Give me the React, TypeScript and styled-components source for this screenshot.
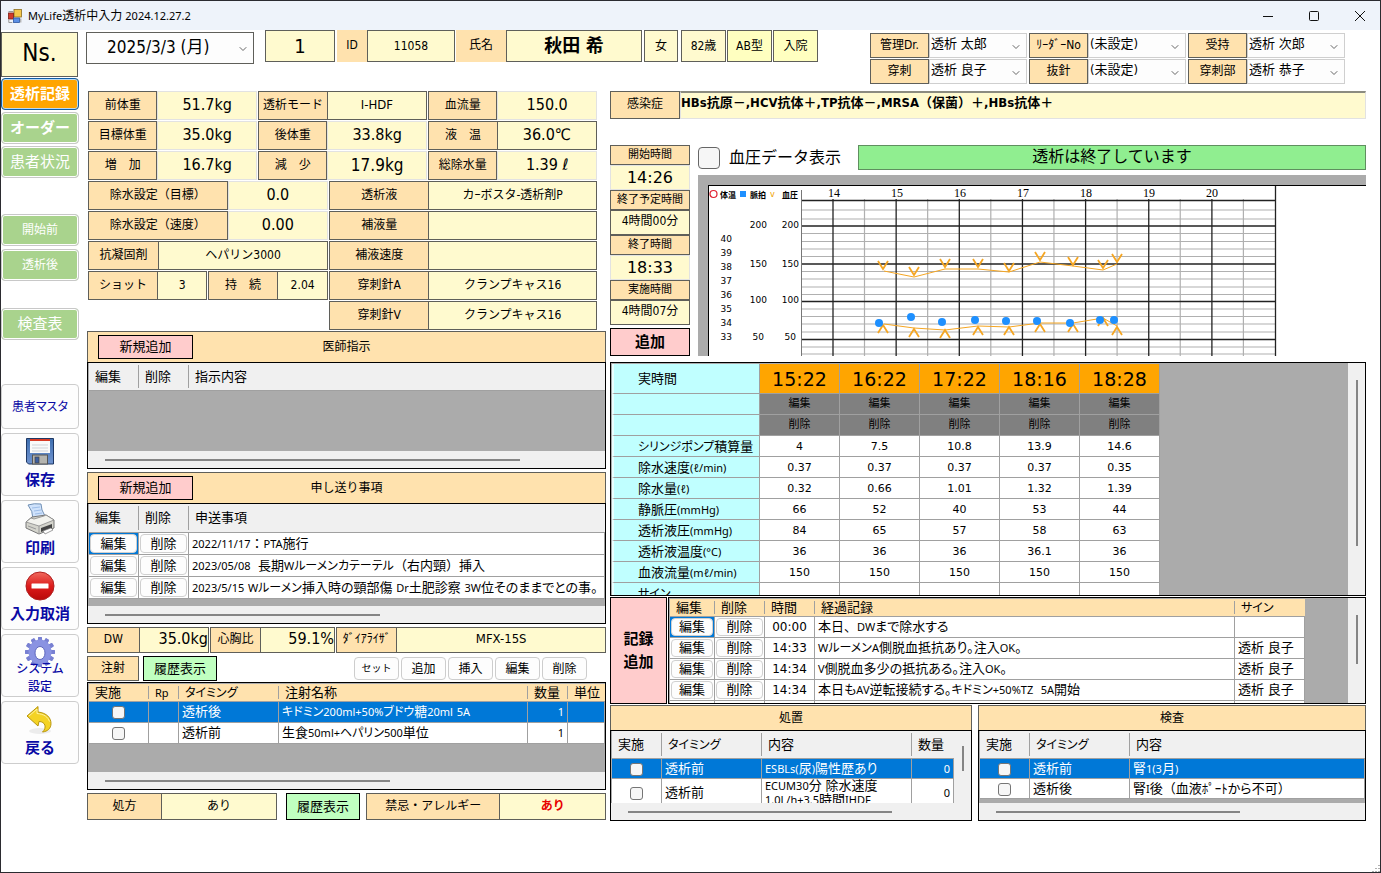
import React, { useId } from "react";
import styled, { createGlobalStyle, css } from "styled-components";
import { ChevronDown } from "lucide-react";

const UI = `"DejaVu Sans Condensed", "Noto Sans", "Noto Sans CJK JP", sans-serif`;
const WIDE = `"DejaVu Sans", "Noto Sans CJK JP", sans-serif`;
const NARROW = `"Noto Sans", "Noto Sans CJK JP", sans-serif`;

const peach = "#ffe2ae";
const cream = "#fffacf";
const line = "#5f5f5a";
const gridLine = "#a0a0a0";
const gray = "#ababab";
const blue = "#0078d7";

const GlobalStyle = createGlobalStyle`
  *, *::before, *::after { box-sizing: border-box; }
  body { margin: 0; background: #fff; color: #000; font: 12px/16px ${UI}; }
  button, input, select { font: inherit; color: inherit; margin: 0; padding: 0; }
  button { cursor: pointer; white-space: nowrap; }
`;

/* ---------- window ---------- */

const Shell = styled.div`
  min-height: 100vh;
  display: flex;
  flex-direction: column;
  border: 1px solid #2b2b30;
  background: #fff;
`;

const TitleBar = styled.header`
  height: 29px;
  display: flex;
  align-items: center;
  gap: 6px;
  padding: 0 14px 0 7px;
  background: #eef3fa;
`;

const Title = styled.h1`
  margin: 0;
  flex: 1;
  font: 12px/16px ${NARROW};
`;

const WindowButtons = styled.div`
  display: flex;
  gap: 34px;
`;

const WindowButton = styled.button`
  width: 12px;
  height: 12px;
  border: 0;
  background: none;
  svg { display: block; }
`;

const Main = styled.div`
  flex: 1;
  display: flex;
  gap: 6px;
  padding-right: 14px;
`;

const Grip = styled.svg`
  align-self: flex-end;
  display: block;
`;

/* ---------- side bar ---------- */

const Sidebar = styled.nav`
  flex: 0 0 79px;
  display: flex;
  flex-direction: column;
  padding: 2px 1px 0 0;
`;

const Role = styled.div`
  width: 77px;
  height: 45px;
  margin-bottom: 1px;
  border: 1px solid ${line};
  background: ${cream};
  font: 24px/40px ${UI};
  text-align: center;
`;

const NavGroup = styled.div<{ $top?: number; $gap?: number }>`
  display: flex;
  flex-direction: column;
  gap: ${(p) => p.$gap ?? 2}px;
  margin-top: ${(p) => p.$top ?? 0}px;
`;

const NavButton = styled.button<{ $active?: boolean; $bold?: boolean; $small?: boolean }>`
  width: 78px;
  height: 32px;
  border: 1px solid ${(p) => (p.$active ? "#0f5fa8" : "#c8c8c8")};
  border-radius: 4px;
  background: ${(p) => (p.$active ? "#ffa500" : "#a9d38d")};
  box-shadow: inset 0 0 0 1px ${(p) => (p.$active ? "#bcd9ee" : "#fff")};
  color: #fff;
  font-size: ${(p) => (p.$small ? 12 : 15)}px;
  font-weight: ${(p) => (p.$bold ? 700 : 400)};
`;

const ToolGroup = styled.div`
  display: flex;
  flex-direction: column;
  gap: 4px;
  margin-top: 44px;
`;

const ToolButton = styled.button<{ $short?: boolean; $small?: boolean }>`
  width: 78px;
  height: ${(p) => (p.$short ? 45 : 63)}px;
  display: flex;
  flex-direction: column;
  align-items: center;
  justify-content: center;
  gap: ${(p) => (p.$small ? 0 : 4)}px;
  padding-bottom: ${(p) => (p.$small || p.$short ? 0 : 3)}px;
  border: 1px solid #cdcdcd;
  border-radius: 4px;
  background: #fdfdfd;
  color: #0a0aa5;
  font-size: ${(p) => (p.$short || p.$small ? 12 : 15)}px;
  font-weight: ${(p) => (p.$short ? 400 : p.$small ? 500 : 700)};
  line-height: 18px;
  font-feature-settings: ${(p) => (p.$short ? `"palt"` : "normal")};
  svg { flex: none; }
`;

const OverIcon = styled.span`
  margin-top: -8px;
`;

/* ---------- header ---------- */

const Content = styled.main`
  flex: 1;
  min-width: 0;
`;

const Header = styled.section`
  display: flex;
  align-items: flex-start;
  height: 61px;
`;

const SelectBox = styled.div<{ $w: number; $h: number; $soft?: boolean }>`
  position: relative;
  width: ${(p) => p.$w}px;
  height: ${(p) => p.$h}px;
  border: 1px solid ${(p) => (p.$soft ? "#cfcfcf" : line)};
  background: #fdfdfd;
  svg { position: absolute; right: 4px; top: 50%; margin-top: -5px; pointer-events: none; }
`;

const Select = styled.select<{ $big?: boolean }>`
  appearance: none;
  width: 100%;
  height: 100%;
  border: 0;
  background: none;
  padding: 0 20px 3px ${(p) => (p.$big ? 20 : 1)}px;
  font-size: ${(p) => (p.$big ? 17 : 13)}px;
`;

const DateArea = styled.div`
  padding-top: 2px;
  margin-right: 11px;
`;

const PatientBox = styled.div<{ $w: number; $mr?: number; $size?: number; $bold?: boolean; $tag?: boolean; $bright?: boolean }>`
  width: ${(p) => p.$w}px;
  height: 32px;
  margin-right: ${(p) => p.$mr ?? 0}px;
  border: ${(p) => (p.$tag ? "0" : `1px solid ${line}`)};
  background: ${(p) => (p.$tag ? peach : p.$bright ? "#ffffc0" : cream)};
  font-size: ${(p) => p.$size ?? 12}px;
  font-weight: ${(p) => (p.$bold ? 700 : 400)};
  line-height: 30px;
  text-align: center;
  white-space: nowrap;
`;

const Staff = styled.div`
  margin: 3px 21px 0 auto;
  display: grid;
  grid-template-columns: repeat(3, auto);
  gap: 1px 2px;
`;

const StaffItem = styled.div`
  display: flex;
`;

const StaffLabel = styled.label`
  width: 59px;
  height: 25px;
  border: 1px solid ${line};
  background: ${peach};
  line-height: 22px;
  text-align: center;
`;

/* ---------- labelled cells ---------- */

const Columns = styled.div`
  display: flex;
  gap: 4px;
  padding-left: 1px;
`;

const Left = styled.div`
  flex: 519 1 0;
  min-width: 0;
  display: flex;
  flex-direction: column;
  gap: 3px;
`;

const Right = styled.div`
  flex: 756 1 0;
  min-width: 0;
  display: flex;
  flex-direction: column;
`;

const Settings = styled.div`
  display: flex;
  flex-direction: column;
  gap: 1px;
  padding: 0 9px 0 1px;
  margin-bottom: -2px;
`;

const Line = styled.div<{ $gap?: number; $h?: number }>`
  display: flex;
  gap: ${(p) => p.$gap ?? 1}px;
  height: ${(p) => p.$h ?? 29}px;
`;

const Half = styled.div<{ $w: number }>`
  flex: ${(p) => p.$w} 1 0;
  min-width: 0;
  display: flex;
  flex-direction: column;
  gap: 1px;
`;

const PairBox = styled.div<{ $w: number }>`
  flex: ${(p) => p.$w} 1 0;
  min-width: 0;
  display: flex;
`;

const cell = css`
  min-width: 0;
  height: 100%;
  border: 1px solid ${line};
  display: flex;
  align-items: center;
  justify-content: center;
  white-space: nowrap;
  padding-bottom: 2px;
`;

const Label = styled.label<{ $w: number }>`
  ${cell}
  flex: ${(p) => p.$w} 1 0;
  background: ${peach};
`;

const Value = styled.output<{ $w: number; $size?: number; $right?: boolean; $red?: boolean }>`
  ${cell}
  flex: ${(p) => p.$w} 1 0;
  margin-left: -1px;
  background: ${cream};
  font-size: ${(p) => p.$size ?? 12}px;
  ${(p) => p.$right && `justify-content: flex-end;`}
  ${(p) => p.$red && `color: #e80000; font-weight: 700;`}
`;

const ValueInput = styled.input<{ $w: number; $size?: number }>`
  flex: ${(p) => p.$w} 1 0;
  min-width: 0;
  width: 0;
  height: 100%;
  border: 1px solid #e2e2e2;
  border-radius: 0;
  background: ${cream};
  font-size: ${(p) => p.$size ?? 16}px;
  text-align: center;
  padding-bottom: 2px;
`;

type PairProps = {
  label: string;
  value: string;
  lw: number;
  vw: number;
  edit?: boolean;
  size?: number;
  right?: boolean;
  red?: boolean;
};

function Pair({ label, value, lw, vw, edit, size, right, red }: PairProps) {
  const id = useId();
  return (
    <PairBox $w={lw + vw}>
      <Label $w={lw} htmlFor={id}>{label}</Label>
      {edit ? (
        <ValueInput $w={vw} $size={size} id={id} defaultValue={value} />
      ) : (
        <Value $w={vw} $size={size} $right={right} $red={red} id={id}>{value}</Value>
      )}
    </PairBox>
  );
}

/* ---------- grids ---------- */

const Panel = styled.section<{ $h: number; $w?: number }>`
  height: ${(p) => p.$h}px;
  display: flex;
  flex-direction: column;
  ${(p) => p.$w && `flex: ${p.$w} 1 0; min-width: 0;`}
`;

const PanelHead = styled.div<{ $h: number }>`
  flex: 0 0 ${(p) => p.$h}px;
  display: grid;
  grid-template-columns: 1fr auto 1fr;
  align-items: center;
  padding: 0 10px;
  border: 1px solid ${line};
  border-bottom: 0;
  background: ${peach};
`;

const PanelTitle = styled.h2`
  grid-column: 2;
  margin: 0;
  font-size: 12px;
  font-weight: 400;
`;

const Frame = styled.div<{ $h?: number }>`
  ${(p) => (p.$h ? `height: ${p.$h}px;` : "flex: 1; min-height: 0;")}
  display: flex;
  min-width: 0;
  overflow: hidden;
  border: 1px solid #000;
  background: ${gray};
`;

const FrameBody = styled.div`
  flex: 1;
  min-width: 0;
  min-height: 0;
  display: flex;
  flex-direction: column;
`;

const Clip = styled.div<{ $top?: boolean }>`
  flex: 1;
  min-height: 0;
  overflow: hidden;
  padding-left: 1px;
  padding-top: ${(p) => (p.$top ? 1 : 0)}px;
`;

const HBar = styled.div`
  flex: 0 0 17px;
  display: flex;
  align-items: center;
  padding-left: 17px;
  background: #f0f0f0;
`;

const HThumb = styled.div<{ $pct: number }>`
  width: ${(p) => p.$pct}%;
  height: 2px;
  background: #858585;
`;

const VBar = styled.div<{ $top: number }>`
  flex: 0 0 17px;
  display: flex;
  justify-content: center;
  padding-top: ${(p) => p.$top}px;
  background: #f0f0f0;
`;

const VThumb = styled.div<{ $h: number }>`
  width: 2px;
  height: ${(p) => p.$h}px;
  background: #858585;
`;

const Table = styled.table<{ $fit?: boolean }>`
  width: ${(p) => (p.$fit ? "auto" : "100%")};
  table-layout: fixed;
  border-collapse: separate;
  border-spacing: 0;
  font-size: 13px;
  font-feature-settings: "palt";
`;

const Th = styled.th<{ $w?: number; $h: number; $peach?: boolean; $last?: boolean }>`
  ${(p) => p.$w && `width: ${p.$w}px;`}
  height: ${(p) => p.$h}px;
  padding: 0 0 0 6px;
  border-bottom: 1px solid ${gridLine};
  background: ${(p) =>
    `${p.$last ? "" : `linear-gradient(${gridLine}, ${gridLine}) right center / 1px calc(100% - 4px) no-repeat, `}linear-gradient(${p.$peach ? peach : "#f0f0f0"}, ${p.$peach ? peach : "#f0f0f0"})`};
  font-weight: 400;
  line-height: 16px;
  text-align: left;
  white-space: nowrap;
  overflow: hidden;
`;

const Tr = styled.tr<{ $selected?: boolean }>`
  background: ${(p) => (p.$selected ? blue : "#fff")};
  color: ${(p) => (p.$selected ? "#fff" : "#000")};
`;

const Td = styled.td<{ $h: number; $align?: string; $current?: boolean; $tight?: boolean }>`
  height: ${(p) => p.$h}px;
  padding: 0 3px;
  ${(p) => p.$tight && "padding: 0 1px;"}
  border-right: 1px solid ${gridLine};
  border-bottom: 1px solid ${gridLine};
  ${(p) => p.$current && `box-shadow: inset 0 0 0 2px ${blue};`}
  line-height: 14px;
  text-align: ${(p) => p.$align ?? "left"};
  white-space: nowrap;
  overflow: hidden;
`;

const Latin = styled.span`
  font: 11px/14px ${NARROW};
`;

const Kana = styled.span`
  font-size: 12px;
`;

const Mark = styled.span`
  font-feature-settings: normal;
`;

const Clock = styled.span`
  font: 12px/14px ${WIDE};
`;

const RUNS = /([\x21-\x7eℓ°]+|[ァ-ヺー]+|[（）：、])/;

/* Western and katakana runs are set smaller than the kanji around them. */
function Mixed({ text }: { text: string }) {
  return (
    <>
      {text.split(RUNS).map((part, i) => {
        if (i % 2 === 0) return part;
        if (/^[\x21-\x7eℓ°]/.test(part)) return <Latin key={i}>{part}</Latin>;
        if (/^[（）：、]/.test(part)) return <Mark key={i}>{part}</Mark>;
        return <Kana key={i}>{part}</Kana>;
      })}
    </>
  );
}

const RowButton = styled.button<{ $h: number }>`
  display: block;
  width: 100%;
  height: ${(p) => p.$h}px;
  border: 1px solid #d0d0d0;
  border-radius: 4px;
  background: #fdfdfd;
  color: #000;
  line-height: 14px;
`;

const Check = styled.input`
  appearance: none;
  display: inline-block;
  vertical-align: middle;
  width: 13px;
  height: 13px;
  border: 1px solid #757575;
  border-radius: 3px;
  background: #f6f6f6;
`;

const ActionButton = styled.button<{ $tone: "pink" | "green"; $w?: number; $h?: number; $size?: number; $bold?: boolean }>`
  ${(p) => p.$w && `width: ${p.$w}px;`}
  height: ${(p) => (p.$h ? `${p.$h}px` : "100%")};
  border: 1px solid #000;
  background: ${(p) => (p.$tone === "pink" ? "#ffcccc" : "#c0ffc0")};
  font-size: ${(p) => p.$size ?? 13}px;
  font-weight: ${(p) => (p.$bold ? 700 : 400)};
`;

const SmallButton = styled.button<{ $tiny?: boolean }>`
  width: 45px;
  height: 23px;
  border: 1px solid #cdcdcd;
  border-radius: 4px;
  background: #fdfdfd;
  font-size: ${(p) => (p.$tiny ? 10 : 12)}px;
`;

const SmallButtons = styled.div`
  flex: 1;
  display: flex;
  justify-content: flex-end;
  align-items: center;
  gap: 2px;
  padding-right: 19px;
`;

const Tag = styled.div<{ $w: number }>`
  ${cell}
  width: ${(p) => p.$w}px;
  background: ${peach};
`;

const InjectionArea = styled.div`
  display: flex;
  flex-direction: column;
  gap: 1px;
`;

const ButtonGap = styled.div`
  display: flex;
  padding: 0 6px 0 9px;
`;

/* ---------- right side ---------- */

const Infection = styled.div`
  display: flex;
  height: 28px;
  margin-bottom: 26px;
`;

const InfectionText = styled.div`
  flex: 1;
  min-width: 0;
  border: 1px solid #e2e2e2;
  border-top: 2px solid #8b8b80;
  background: ${cream};
  font-size: 13px;
  font-weight: 700;
  line-height: 20px;
  white-space: nowrap;
  overflow: hidden;
`;

const Progress = styled.div`
  display: flex;
  gap: 8px;
  height: 211px;
  margin-bottom: 6px;
`;

const Times = styled.div`
  flex: 0 0 80px;
  display: flex;
  flex-direction: column;
`;

const TimeTag = styled.label`
  height: 20px;
  border: 1px solid ${line};
  background: ${peach};
  font-size: 11px;
  line-height: 17px;
  text-align: center;
`;

const TimeInput = styled.input`
  width: 100%;
  height: 25px;
  border: 1px solid #e2e2e2;
  background: ${cream};
  font: 16px/20px ${WIDE};
  text-align: center;
`;

const TimeValue = styled.output`
  height: 25px;
  border: 1px solid ${line};
  background: ${cream};
  line-height: 21px;
  text-align: center;
`;

const AddWrap = styled.div`
  display: grid;
  margin-top: 3px;
`;

const ChartArea = styled.div`
  flex: 1;
  min-width: 0;
  display: flex;
  flex-direction: column;
  gap: 5px;
`;

const StatusRow = styled.div`
  display: flex;
  height: 25px;
`;

const BpLabel = styled.label`
  flex: 0 0 160px;
  display: flex;
  align-items: center;
  gap: 9px;
  font-size: 16px;
  white-space: nowrap;
`;

const BigCheck = styled(Check)`
  width: 22px;
  height: 22px;
  border-color: #666;
  border-radius: 4px;
`;

const Status = styled.div`
  flex: 1;
  border: 1px solid #5f8f5f;
  background: #90ee90;
  font-size: 16px;
  line-height: 22px;
  text-align: center;
`;

const ChartFrame = styled.div`
  flex: 1;
  overflow: hidden;
  padding: 10px 0 0 10px;
  background: ${gray};
  svg { display: block; background: #fff; }
`;

const ChartPaper = styled.div`
  height: 100%;
  border: 1px solid #000;
  border-right: 0;
  border-bottom: 0;
  background: #fff;
`;

const TimeTh = styled.th`
  width: 80px;
  height: 30px;
  border-right: 1px solid ${gridLine};
  border-bottom: 1px solid ${gridLine};
  background: #ffa500;
  font: 19px/24px ${WIDE};
  padding: 0;
`;

const RowHead = styled.th<{ $tall?: boolean }>`
  width: 148px;
  height: ${(p) => (p.$tall ? 30 : 21)}px;
  padding: 1px 0 0 24px;
  border-left: 2px solid #e8ffff;
  border-right: 1px solid ${gridLine};
  border-bottom: 1px solid ${gridLine};
  background: #c0ffff;
  font-weight: 400;
  line-height: 14px;
  text-align: left;
  white-space: nowrap;
`;

const DarkTd = styled.td`
  height: 21px;
  padding: 0;
  border-right: 1px solid ${gridLine};
  border-bottom: 1px solid ${gridLine};
  background: #808080;
`;

const FlatButton = styled.button`
  display: block;
  width: 100%;
  height: 20px;
  border: 0;
  background: none;
  font-size: 11px;
  line-height: 20px;
`;

const NumTd = styled.td`
  height: 21px;
  padding: 1px 0 0;
  border-right: 1px solid ${gridLine};
  border-bottom: 1px solid ${gridLine};
  background: #fff;
  font: 11px/14px ${WIDE};
  text-align: center;
`;

const RecordRow = styled.div`
  display: flex;
  gap: 1px;
  height: 107px;
  margin: 1px 0;
`;

const RecordButton = styled(ActionButton)`
  flex: 0 0 57px;
  line-height: 23px;
  white-space: normal;
`;

const BottomRow = styled.div`
  display: flex;
  gap: 6px;
`;

/* ---------- drawings ---------- */

const AppIcon = () => (
  <svg width="14" height="14" viewBox="0 0 14 14">
    <rect x="6" y="0.5" width="7.5" height="7.5" fill="#f5c84c" stroke="#8a6d1f" strokeWidth="0.8" />
    <rect x="0.5" y="4" width="5" height="6" fill="#d23a2a" stroke="#7b1d14" strokeWidth="0.8" />
    <rect x="5.5" y="9" width="6" height="4.5" fill="#5a8fe6" stroke="#2c55a0" strokeWidth="0.8" />
    <path d="M.5 2.5h5M12.8 9.5v4M.8 11v2.500h3.500" fill="none" stroke="#999" />
  </svg>
);

const SaveIcon = () => (
  <svg width="30" height="30" viewBox="0 0 30 30">
    <defs>
      <linearGradient id="disk" x1="0" y1="0" x2="0" y2="1">
        <stop offset="0" stopColor="#3f6fb0" />
        <stop offset="1" stopColor="#6f93cf" />
      </linearGradient>
    </defs>
    <path d="M1.500 1.500h27v25.500h-25l-2-2z" fill="url(#disk)" stroke="#1f3864" />
    <rect x="5" y="2" width="20" height="14" fill="#fafafa" />
    <rect x="5" y="2" width="20" height="2" fill="#d93a26" />
    <path d="M7 8h16M7 11h16M7 14h16" stroke="#cfd3da" />
    <rect x="7.500" y="18" width="15" height="9" fill="#b4b4b0" stroke="#555" />
    <rect x="10" y="20" width="4" height="6" fill="#3c5fa0" stroke="#444" strokeWidth="0.700" />
  </svg>
);

const PrintIcon = () => (
  <svg width="30" height="32" viewBox="0 0 30 32">
    <path d="M3 2Q9 0 16 1q0 6 4 12l-12 3Q8 8 3 2z" fill="#cfe2fb" stroke="#6f8fb5" />
    <path d="M7 5l8-1M9 8l7-1M10 11l7-1" stroke="#9dbde8" />
    <path d="M1 19l6-5 14-2 8 5v8l-15 6-13-6z" fill="#d4d4cc" stroke="#777" />
    <path d="M1 19l13 4 15-6-8-5-2 1-10 3-3-1z" fill="#f3f3ee" stroke="#888" strokeWidth="0.800" />
    <path d="M14 23v8" stroke="#999" />
    <path d="M16 25l11-4v4l-11 4z" fill="#444" />
    <path d="M18 28l8-3 2 2-8 4z" fill="#fff" stroke="#777" strokeWidth="0.700" />
    <path d="M3 23l8 3" stroke="#999" />
  </svg>
);

const StopIcon = () => (
  <svg width="30" height="30" viewBox="0 0 30 30">
    <defs>
      <linearGradient id="stop" x1="0" y1="0" x2="0" y2="1">
        <stop offset="0" stopColor="#f06a5e" />
        <stop offset="0.5" stopColor="#dd1c1c" />
        <stop offset="1" stopColor="#b80808" />
      </linearGradient>
    </defs>
    <circle cx="15" cy="15" r="14" fill="url(#stop)" stroke="#b02020" />
    <rect x="6.500" y="12.500" width="17" height="5" rx="0.500" fill="#fff" />
  </svg>
);

const GearIcon = () => (
  <svg width="30" height="32" viewBox="0 0 30 32">
    <g fill="#7880d2">
      {Array.from({ length: 12 }, (_, i) => (
        <rect key={i} x="13" y="1" width="4" height="30" rx="1" transform={`rotate(${i * 30} 15 16)`} />
      ))}
    </g>
    <ellipse cx="15" cy="16" rx="11.500" ry="12.500" fill="#8a93e2" />
    <ellipse cx="15" cy="17" rx="5" ry="6.500" fill="#fff" stroke="#5f68bd" />
  </svg>
);

const BackIcon = () => (
  <svg width="30" height="30" viewBox="0 0 30 30">
    <ellipse cx="15" cy="26" rx="11" ry="3" fill="#ececec" />
    <path d="M2 11L13 1.500v5.500c9 1 13 6 13 11.500 0 5-3.500 8-8.500 8.500 4.500-4 3-10.500-3.500-10.500l-1 4.500z" fill="#f4d325" stroke="#b8960f" />
    <path d="M4 11l8-7v4.500c7 .5 11 3.500 12.500 8" fill="none" stroke="#fff2a0" />
  </svg>
);

/* ---------- chart ---------- */

const hours = [14, 15, 16, 17, 18, 19, 20];
const upper = [[174, 84], [205, 90], [236, 82], [269, 82], [300, 86], [331, 75], [364, 80], [394, 83], [408, 77]];
const upperLine = "175,85 205,91 236,83 269,83 300,86 331,76 364,80 394,84 408,78";
const lower = [[174, 138], [205, 142], [236, 143], [269, 140], [300, 140], [331, 137], [364, 137], [394, 131], [408, 140]];
const lowerLine = "175,138 205,142 236,144 269,140 300,141 331,137 364,137 394,132 408,140";
const pulse = [[170, 137], [202, 131], [233, 136], [266, 134], [297, 135], [328, 135], [361, 137], [391, 134], [405, 134]];
const major = [40, 78, 115.5, 153.5];
const minor = [24, 33, 47.5, 55.5, 63, 70.5, 85.5, 93, 101, 108.5, 123, 130.5, 138, 146, 161, 168];

function BpChart() {
  return (
    <svg width="600" height="170" viewBox="0 0 600 170" fontFamily={UI}>
      <circle cx="4.500" cy="8" r="3.500" fill="none" stroke="#e02030" strokeWidth="1.200" />
      <text x="11" y="12" fontSize="8" fontWeight="700">体温</text>
      <rect x="31" y="5" width="6" height="6" fill="#1e90ff" />
      <text x="41" y="12" fontSize="8" fontWeight="700">脈拍</text>
      <text x="61" y="11" fontSize="9" fill="#f0a000">v</text>
      <text x="73" y="12" fontSize="8" fontWeight="700">血圧</text>
      <g stroke="#b0b0b0" strokeWidth="1.200">
        {minor.map((y) => <path key={y} d={`M92 ${y}H566`} />)}
        {hours.map((h, i) => <path key={h} d={`M${155.500 + i * 63.150} 13V170`} />)}
      </g>
      <g stroke="#222" strokeWidth="1.300">
        {hours.map((h, i) => <path key={h} d={`M${124 + i * 63.150} 13V170`} />)}
        {major.map((y) => <path key={y} d={`M92 ${y}H566`} />)}
        <path d="M92 14.500H566M566.500 0V170" />
      </g>
      <path d="M92.500 4V170" stroke="#777" />
      <g fontFamily='"Liberation Serif", serif' fontSize="12" textAnchor="middle">
        {hours.map((h, i) => <text key={h} x={125 + i * 63} y="11">{h}</text>)}
      </g>
      <g fontFamily='"DejaVu Sans", sans-serif' fontSize="9" textAnchor="end">
        {[200, 150, 100, 50].map((n, i) => (
          <React.Fragment key={n}>
            <text x={n === 50 ? 55 : 58} y={42 + [0, 39, 75, 112][i]}>{n}</text>
            <text x={n === 50 ? 87 : 90} y={42 + [0, 39, 75, 112][i]}>{n}</text>
          </React.Fragment>
        ))}
        {[40, 39, 38, 37, 36, 35, 34, 33].map((n, i) => (
          <text key={n} x="23" y={56 + i * 14}>{n}</text>
        ))}
      </g>
      <g fill="none" stroke="#f5a623">
        <polyline points={upperLine} />
        <polyline points={lowerLine} />
        {upper.map(([x, y]) => <path key={x} d={`M${x - 5} ${y - 9}L${x} ${y - 1}L${x + 5} ${y - 9}`} strokeWidth="1.800" />)}
        {lower.map(([x, y]) => <path key={x} d={`M${x - 5} ${y + 9}L${x} ${y + 1}L${x + 5} ${y + 9}`} strokeWidth="1.800" />)}
      </g>
      <g fill="#1e90ff">
        {pulse.map(([x, y]) => <circle key={x} cx={x} cy={y} r="4" />)}
      </g>
    </svg>
  );
}

/* ---------- data ---------- */

const staff = [
  ["管理Dr.", "透析 太郎"], ["ﾘｰﾀﾞｰNo", "(未設定)"], ["受持", "透析 次郎"],
  ["穿刺", "透析 良子"], ["抜針", "(未設定)"], ["穿刺部", "透析 恭子"],
];

const notes = [
  "2022/11/17：PTA施行",
  "2023/05/08\u00a0\u00a0長期Wルーメンカテーテル（右内頸）挿入",
  "2023/5/15 Wルーメン挿入時の頸部傷 Dr土肥診察 3W位そのままでとの事。",
];

const times = ["15:22", "16:22", "17:22", "18:16", "18:28"];

const measures: [string, string[]][] = [
  ["シリンジポンプ積算量", ["4", "7.5", "10.8", "13.9", "14.6"]],
  ["除水速度(ℓ/min)", ["0.37", "0.37", "0.37", "0.37", "0.35"]],
  ["除水量(ℓ)", ["0.32", "0.66", "1.01", "1.32", "1.39"]],
  ["静脈圧(mmHg)", ["66", "52", "40", "53", "44"]],
  ["透析液圧(mmHg)", ["84", "65", "57", "58", "63"]],
  ["透析液温度(°C)", ["36", "36", "36", "36.1", "36"]],
  ["血液流量(mℓ/min)", ["150", "150", "150", "150", "150"]],
  ["サイン", ["", "", "", "", ""]],
];

const records = [
  ["00:00", "本日、DWまで除水する", ""],
  ["14:33", "WルーメンA側脱血抵抗あり。注入OK。", "透析 良子"],
  ["14:34", "V側脱血多少の抵抗ある。注入OK。", "透析 良子"],
  ["14:34", "本日もAV逆転接続する。キドミン+50%TZ\u00a0\u00a05A開始", "透析 良子"],
];

const injections = [
  ["透析後", "キドミン200ml+50%ブドウ糖20ml 5A", "1"],
  ["透析前", "生食50ml+ヘパリン500単位", "1"],
];

/* ---------- parts ---------- */

function StaffSelect({ label, value }: { label: string; value: string }) {
  const id = useId();
  return (
    <StaffItem>
      <StaffLabel htmlFor={id}>{label}</StaffLabel>
      <SelectBox $w={98} $h={25} $soft>
        <Select id={id}><option>{value}</option></Select>
        <ChevronDown size={12} color="#666" strokeWidth={2} />
      </SelectBox>
    </StaffItem>
  );
}

function SideNav() {
  return (
    <Sidebar>
      <Role>Ns.</Role>
      <NavGroup>
        <NavButton $active $bold>透析記録</NavButton>
        <NavButton $bold>オーダー</NavButton>
        <NavButton>患者状況</NavButton>
      </NavGroup>
      <NavGroup $top={36} $gap={3}>
        <NavButton $small>開始前</NavButton>
        <NavButton $small>透析後</NavButton>
      </NavGroup>
      <NavGroup $top={27}>
        <NavButton>検査表</NavButton>
      </NavGroup>
      <ToolGroup>
        <ToolButton $short>患者マスタ</ToolButton>
        <ToolButton><SaveIcon />保存</ToolButton>
        <ToolButton><PrintIcon />印刷</ToolButton>
        <ToolButton><StopIcon />入力取消</ToolButton>
        <ToolButton $small><GearIcon /><OverIcon>システム<br />設定</OverIcon></ToolButton>
        <ToolButton><BackIcon />戻る</ToolButton>
      </ToolGroup>
    </Sidebar>
  );
}

function PatientHeader() {
  return (
    <Header>
      <DateArea>
        <SelectBox $w={168} $h={32}>
          <Select $big aria-label="日付"><option>2025/3/3 (月)</option></Select>
          <ChevronDown size={12} color="#666" strokeWidth={2} />
        </SelectBox>
      </DateArea>
      <PatientBox $w={70} $mr={2} $size={20}>1</PatientBox>
      <PatientBox $w={30} $tag>ID</PatientBox>
      <PatientBox $w={88} $mr={1}>11058</PatientBox>
      <PatientBox $w={50} $tag>氏名</PatientBox>
      <PatientBox $w={136} $mr={2} $size={18} $bold>秋田 希</PatientBox>
      <PatientBox $w={34} $mr={3}>女</PatientBox>
      <PatientBox $w={45} $mr={1}>82歳</PatientBox>
      <PatientBox $w={45} $mr={1} $bright>AB型</PatientBox>
      <PatientBox $w={45} $bright>入院</PatientBox>
      <Staff>
        {staff.map(([l, v]) => <StaffSelect key={l} label={l} value={v} />)}
      </Staff>
    </Header>
  );
}

function SettingsBlock() {
  return (
    <Settings>
      <Line>
        <Pair label="前体重" value="51.7kg" lw={69} vw={100} edit />
        <Pair label="透析モード" value="I-HDF" lw={69} vw={100} size={13} />
        <Pair label="血流量" value="150.0" lw={69} vw={100} edit />
      </Line>
      <Line>
        <Pair label="目標体重" value="35.0kg" lw={69} vw={100} edit />
        <Pair label="後体重" value="33.8kg" lw={69} vw={100} edit />
        <Pair label="液　温" value="36.0℃" lw={69} vw={100} size={16} />
      </Line>
      <Line>
        <Pair label="増　加" value="16.7kg" lw={69} vw={100} edit />
        <Pair label="減　少" value="17.9kg" lw={69} vw={100} size={17} edit />
        <Pair label="総除水量" value="1.39 ℓ" lw={69} vw={100} edit />
      </Line>
      <Line $h={149}>
        <Half $w={240}>
          <Line><Pair label="除水設定（目標）" value="0.0" lw={140} vw={100} edit /></Line>
          <Line><Pair label="除水設定（速度）" value="0.00" lw={140} vw={100} edit /></Line>
          <Line><Pair label="抗凝固剤" value="ヘパリン3000" lw={70} vw={170} /></Line>
          <Line>
            <Pair label="ショット" value="3" lw={70} vw={49} />
            <Pair label="持　続" value="2.04" lw={70} vw={50} />
          </Line>
        </Half>
        <Half $w={268}>
          <Line><Pair label="透析液" value="カｰボスタ-透析剤P" lw={99} vw={168} /></Line>
          <Line><Pair label="補液量" value="" lw={99} vw={168} /></Line>
          <Line><Pair label="補液速度" value="" lw={99} vw={168} /></Line>
          <Line><Pair label="穿刺針A" value="クランプキャス16" lw={99} vw={168} /></Line>
          <Line><Pair label="穿刺針V" value="クランプキャス16" lw={99} vw={168} /></Line>
        </Half>
      </Line>
    </Settings>
  );
}

function LeftColumn() {
  return (
    <Left>
      <SettingsBlock />
      <Panel $h={138}>
        <PanelHead $h={31}>
          <ActionButton $tone="pink" $w={95} $h={24}>新規追加</ActionButton>
          <PanelTitle>医師指示</PanelTitle>
        </PanelHead>
        <Frame>
          <FrameBody>
            <Clip>
              <Table>
                <thead>
                  <tr><Th $w={50} $h={28}>編集</Th><Th $w={50} $h={28}>削除</Th><Th $h={28} $last>指示内容</Th></tr>
                </thead>
              </Table>
            </Clip>
            <HBar><HThumb $pct={83} /></HBar>
          </FrameBody>
        </Frame>
      </Panel>
      <Panel $h={152}>
        <PanelHead $h={31}>
          <ActionButton $tone="pink" $w={95} $h={24}>新規追加</ActionButton>
          <PanelTitle>申し送り事項</PanelTitle>
        </PanelHead>
        <Frame>
          <FrameBody>
            <Clip>
              <Table>
                <thead>
                  <tr><Th $w={50} $h={29}>編集</Th><Th $w={50} $h={29}>削除</Th><Th $h={29} $last>申送事項</Th></tr>
                </thead>
                <tbody>
                  {notes.map((n, i) => (
                    <Tr key={n}>
                      <Td $h={22} $tight $current={i === 0}><RowButton $h={19}>編集</RowButton></Td>
                      <Td $h={22} $tight><RowButton $h={19}>削除</RowButton></Td>
                      <Td $h={22}><Mixed text={n} /></Td>
                    </Tr>
                  ))}
                </tbody>
              </Table>
            </Clip>
            <HBar><HThumb $pct={55} /></HBar>
          </FrameBody>
        </Frame>
      </Panel>
      <Line $h={26}>
        <Pair label="DW" value="35.0kg" lw={52} vw={70} size={16} right />
        <Pair label="心胸比" value="59.1%" lw={50} vw={75} size={16} right />
        <Pair label="ﾀﾞｲｱﾗｲｻﾞ" value="MFX-15S" lw={60} vw={210} size={13} />
      </Line>
      <InjectionArea>
        <Line $h={25} $gap={4}>
          <Tag $w={52}>注射</Tag>
          <ActionButton $tone="green" $w={74}>履歴表示</ActionButton>
          <SmallButtons>
            <SmallButton $tiny>セット</SmallButton>
            <SmallButton>追加</SmallButton>
            <SmallButton>挿入</SmallButton>
            <SmallButton>編集</SmallButton>
            <SmallButton>削除</SmallButton>
          </SmallButtons>
        </Line>
        <Frame $h={108}>
          <FrameBody>
            <Clip $top>
              <Table>
                <thead>
                  <tr>
                    <Th $peach $w={60} $h={18}>実施</Th>
                    <Th $peach $w={30} $h={18}><Mixed text="Rp" /></Th>
                    <Th $peach $w={100} $h={18}><Mixed text="タイミング" /></Th>
                    <Th $peach $h={18}>注射名称</Th>
                    <Th $peach $w={40} $h={18}>数量</Th>
                    <Th $peach $w={37} $h={18} $last>単位</Th>
                  </tr>
                </thead>
                <tbody>
                  {injections.map(([t, n, q], i) => (
                    <Tr key={t} $selected={i === 0}>
                      <Td $h={21} $align="center"><Check type="checkbox" aria-label={`${n} 実施`} /></Td>
                      <Td $h={21} />
                      <Td $h={21}>{t}</Td>
                      <Td $h={21}><Mixed text={n} /></Td>
                      <Td $h={21} $align="right"><Mixed text={q} /></Td>
                      <Td $h={21} />
                    </Tr>
                  ))}
                </tbody>
              </Table>
            </Clip>
            <HBar><HThumb $pct={57} /></HBar>
          </FrameBody>
        </Frame>
      </InjectionArea>
      <Line $h={27} $gap={0}>
        <Pair label="処方" value="あり" lw={74} vw={116} />
        <ButtonGap><ActionButton $tone="green" $w={74}>履歴表示</ActionButton></ButtonGap>
        <Pair label="禁忌・アレルギー" value="あり" lw={134} vw={106} red />
      </Line>
    </Left>
  );
}

function TimesColumn() {
  const id = useId();
  return (
    <Times>
      <TimeTag htmlFor={id + "s"}>開始時間</TimeTag>
      <TimeInput id={id + "s"} defaultValue="14:26" />
      <TimeTag htmlFor={id + "p"}>終了予定時間</TimeTag>
      <TimeValue id={id + "p"}>4時間00分</TimeValue>
      <TimeTag htmlFor={id + "e"}>終了時間</TimeTag>
      <TimeInput id={id + "e"} defaultValue="18:33" />
      <TimeTag htmlFor={id + "d"}>実施時間</TimeTag>
      <TimeValue id={id + "d"}>4時間07分</TimeValue>
      <AddWrap><ActionButton $tone="pink" $h={28} $size={15} $bold>追加</ActionButton></AddWrap>
    </Times>
  );
}

function MeasureGrid() {
  return (
    <Frame $h={234}>
      <Clip $top>
        <Table $fit>
          <thead>
            <tr>
              <RowHead $tall>実時間</RowHead>
              {times.map((t) => <TimeTh key={t}>{t}</TimeTh>)}
            </tr>
          </thead>
          <tbody>
            {["編集", "削除"].map((a) => (
              <tr key={a}>
                <RowHead />
                {times.map((t) => <DarkTd key={t}><FlatButton>{a}</FlatButton></DarkTd>)}
              </tr>
            ))}
            {measures.map(([name, values]) => (
              <tr key={name}>
                <RowHead><Mixed text={name} /></RowHead>
                {values.map((v, i) => <NumTd key={i}>{v}</NumTd>)}
              </tr>
            ))}
          </tbody>
        </Table>
      </Clip>
      <VBar $top={17}><VThumb $h={166} /></VBar>
    </Frame>
  );
}

const RecordFrame = styled(Frame)`
  flex: 1;
`;

const RecordBody = styled(Clip)`
  padding-right: 43px;
`;

function RecordGrid() {
  return (
    <RecordRow>
      <RecordButton $tone="pink" $size={15} $bold>記録<br />追加</RecordButton>
      <RecordFrame>
        <RecordBody $top>
          <Table>
            <thead>
              <tr>
                <Th $peach $w={45} $h={18}>編集</Th>
                <Th $peach $w={50} $h={18}>削除</Th>
                <Th $peach $w={50} $h={18}>時間</Th>
                <Th $peach $h={18}>経過記録</Th>
                <Th $peach $w={70} $h={18} $last><Mixed text="サイン" /></Th>
              </tr>
            </thead>
            <tbody>
              {records.map(([t, n, s], i) => (
                <Tr key={i}>
                  <Td $h={21} $tight $current={i === 0}><RowButton $h={18}>編集</RowButton></Td>
                  <Td $h={21} $tight><RowButton $h={18}>削除</RowButton></Td>
                  <Td $h={21} $align="center"><Clock>{t}</Clock></Td>
                  <Td $h={21}><Mixed text={n} /></Td>
                  <Td $h={21}>{s}</Td>
                </Tr>
              ))}
              <Tr>
                <Td $h={21} /><Td $h={21} /><Td $h={21} /><Td $h={21} /><Td $h={21} />
              </Tr>
            </tbody>
          </Table>
        </RecordBody>
        <VBar $top={17}><VThumb $h={49} /></VBar>
      </RecordFrame>
    </RecordRow>
  );
}

const SideBySide = styled.div`
  flex: 1;
  min-height: 0;
  display: flex;
`;

const BottomFrame = styled(Frame)`
  flex-direction: column;
`;

function BottomPanels() {
  return (
    <BottomRow>
      <Panel $h={116} $w={362}>
        <PanelHead $h={25}><PanelTitle>処置</PanelTitle></PanelHead>
        <BottomFrame>
          <SideBySide>
            <Clip>
              <Table>
                <thead>
                  <tr>
                    <Th $w={50} $h={28}>実施</Th><Th $w={100} $h={28}><Mixed text="タイミング" /></Th>
                    <Th $h={28}>内容</Th><Th $w={42} $h={28} $last>数量</Th>
                  </tr>
                </thead>
                <tbody>
                  <Tr $selected>
                    <Td $h={20} $align="center"><Check type="checkbox" aria-label="ESBLs 実施" /></Td>
                    <Td $h={20}>透析前</Td>
                    <Td $h={20}><Mixed text="ESBLs(尿)陽性歴あり" /></Td>
                    <Td $h={20} $align="right"><Mixed text="0" /></Td>
                  </Tr>
                  <Tr>
                    <Td $h={29} $align="center"><Check type="checkbox" aria-label="ECUM 実施" /></Td>
                    <Td $h={29}>透析前</Td>
                    <Td $h={29}><Mixed text="ECUM30分 除水速度" /><br /><Mixed text="1.0L/h+3.5時間IHDF" /></Td>
                    <Td $h={29} $align="right"><Mixed text="0" /></Td>
                  </Tr>
                </tbody>
              </Table>
            </Clip>
            <VBar $top={15}><VThumb $h={25} /></VBar>
          </SideBySide>
          <HBar><HThumb $pct={77} /></HBar>
        </BottomFrame>
      </Panel>
      <Panel $h={116} $w={388}>
        <PanelHead $h={25}><PanelTitle>検査</PanelTitle></PanelHead>
        <BottomFrame>
          <Clip>
            <Table>
              <thead>
                <tr><Th $w={50} $h={28}>実施</Th><Th $w={100} $h={28}><Mixed text="タイミング" /></Th><Th $h={28} $last>内容</Th></tr>
              </thead>
              <tbody>
                <Tr $selected>
                  <Td $h={20} $align="center"><Check type="checkbox" aria-label="腎1 実施" /></Td>
                  <Td $h={20}>透析前</Td>
                  <Td $h={20}><Mixed text="腎1(3月)" /></Td>
                </Tr>
                <Tr>
                  <Td $h={20} $align="center"><Check type="checkbox" aria-label="腎I後 実施" /></Td>
                  <Td $h={20}>透析後</Td>
                  <Td $h={20}><Mixed text="腎I後（血液ﾎﾟｰﾄから不可）" /></Td>
                </Tr>
              </tbody>
            </Table>
          </Clip>
          <HBar><HThumb $pct={66} /></HBar>
        </BottomFrame>
      </Panel>
    </BottomRow>
  );
}

export default function App() {
  return (
    <Shell>
      <GlobalStyle />
      <TitleBar>
        <AppIcon />
        <Title><Mixed text="MyLife透析中入力 2024.12.27.2" /></Title>
        <WindowButtons>
          <WindowButton aria-label="最小化"><svg width="12" height="12"><path d="M1 6.500h10" stroke="#111" /></svg></WindowButton>
          <WindowButton aria-label="最大化"><svg width="12" height="12"><rect x="1.500" y="1.500" width="9" height="9" rx="1" fill="none" stroke="#111" /></svg></WindowButton>
          <WindowButton aria-label="閉じる"><svg width="12" height="12"><path d="M1 1l10 10M11 1L1 11" stroke="#111" /></svg></WindowButton>
        </WindowButtons>
      </TitleBar>
      <Main>
        <SideNav />
        <Content>
          <PatientHeader />
          <Columns>
            <LeftColumn />
            <Right>
              <Infection>
                <Tag $w={70}>感染症</Tag>
                <InfectionText>HBs抗原－,HCV抗体＋,TP抗体－,MRSA（保菌）＋,HBs抗体＋</InfectionText>
              </Infection>
              <Progress>
                <TimesColumn />
                <ChartArea>
                  <StatusRow>
                    <BpLabel><BigCheck type="checkbox" />血圧データ表示</BpLabel>
                    <Status>透析は終了しています</Status>
                  </StatusRow>
                  <ChartFrame><ChartPaper><BpChart /></ChartPaper></ChartFrame>
                </ChartArea>
              </Progress>
              <MeasureGrid />
              <RecordGrid />
              <BottomPanels />
            </Right>
          </Columns>
        </Content>
      </Main>
      <Grip width="8" height="8"><path d="M7 1v1M7 4v1M4 4v1M7 7v1M4 7v1M1 7v1" stroke="#b0b0b0" strokeWidth="2" /></Grip>
    </Shell>
  );
}
